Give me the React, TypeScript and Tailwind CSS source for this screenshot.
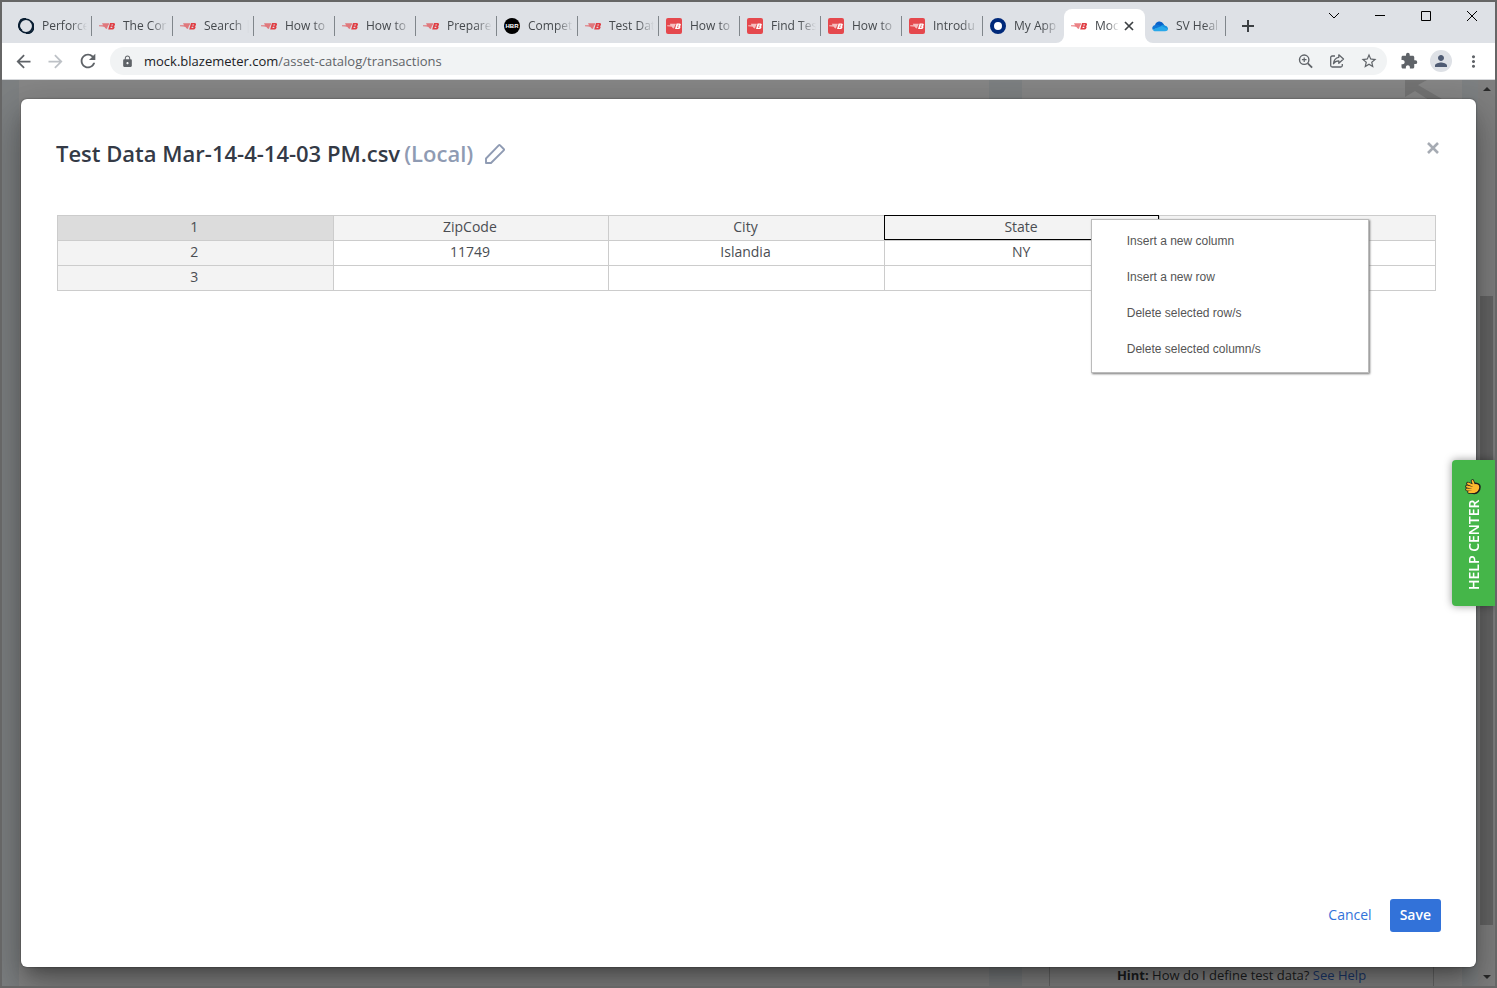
import React, { useState } from 'react';
import {
  MdArrowBack,
  MdArrowForward,
  MdExtension,
  MdLock,
  MdMoreVert,
  MdPerson,
  MdRefresh,
  MdStarBorder,
} from 'react-icons/md';

type Favicon = 'perforce' | 'blaze' | 'blazeBox' | 'hbr' | 'ring' | 'cloud';

interface Tab {
  icon: Favicon;
  title: string;
  active?: boolean;
}

const tabs: Tab[] = [
  { icon: 'perforce', title: 'Perforce' },
  { icon: 'blaze', title: 'The Cor' },
  { icon: 'blaze', title: 'Search |' },
  { icon: 'blaze', title: 'How to' },
  { icon: 'blaze', title: 'How to' },
  { icon: 'blaze', title: 'Prepare' },
  { icon: 'hbr', title: 'Compet' },
  { icon: 'blaze', title: 'Test Dat' },
  { icon: 'blazeBox', title: 'How to' },
  { icon: 'blazeBox', title: 'Find Tes' },
  { icon: 'blazeBox', title: 'How to' },
  { icon: 'blazeBox', title: 'Introdu' },
  { icon: 'ring', title: 'My App' },
  { icon: 'blaze', title: 'Moc', active: true },
  { icon: 'cloud', title: 'SV Heal' },
];

const rows = [
  ['1', 'ZipCode', 'City', 'State', ''],
  ['2', '11749', 'Islandia', 'NY', ''],
  ['3', '', '', '', ''],
];

const menuItems = [
  'Insert a new column',
  'Insert a new row',
  'Delete selected row/s',
  'Delete selected column/s',
];

const BlazeMark = ({ boxed }: { boxed?: boolean }) => (
  <svg viewBox="0 0 16 16" className="size-4 shrink-0">
    {boxed && <rect width="16" height="16" rx="2" fill="#e5484d" />}
    <g fill={boxed ? '#fff' : '#e03f45'} transform={boxed ? 'translate(1.2 1.2) scale(.85)' : undefined}>
      <path d="M3 5.300h7.200L9.700 7H9.400l-.4 1.500H8.600L8 11 6.300 10.300 5.500 9 3.500 8.600 0 8.200V7.200h4z" opacity=".65" />
      <path
        fillRule="evenodd"
        d="M11 5h3.300c1.500 0 2 .9 1.700 1.900-.2.600-.6 1-1.200 1.200.7.200.9.800.7 1.600-.4 1.300-1.300 1.900-2.800 1.900H9.200zm1.500 1.400-.3 1h1.200c.8 0 1-1 .2-1zm-.7 2.300-.4 1.300h1.300c.9 0 1.100-1.300.3-1.300z"
      />
    </g>
  </svg>
);

const TabIcon = ({ icon }: { icon: Favicon }) => {
  if (icon === 'blaze') return <BlazeMark />;
  if (icon === 'blazeBox') return <BlazeMark boxed />;
  if (icon === 'hbr') {
    return (
      <span className="flex size-4 shrink-0 items-center justify-center rounded-full bg-black font-['Liberation_Sans'] text-[6px] font-bold text-white">
        HBR
      </span>
    );
  }
  if (icon === 'ring') {
    return (
      <svg viewBox="0 0 16 16" className="size-4 shrink-0">
        <circle cx="8" cy="8" r="6" fill="#fff" stroke="#00297a" strokeWidth="4" />
      </svg>
    );
  }
  if (icon === 'cloud') {
    return (
      <svg viewBox="0 0 16 16" className="size-4 shrink-0">
        <path d="M3 7.2A4.6 4.6 0 0 1 11.6 6L13 9 4 12z" fill="#0a62c9" />
        <path d="M3.3 7a3.1 3.1 0 0 0-2.5 4.8L10 8.2 6 6.7A4 4 0 0 0 3.3 7z" fill="#1177d6" />
        <path d="M11 6.4a3.6 3.6 0 0 1 2 1.4c1.700.2 3 1.300 3 3.200l-3 .5-4.500-3.500z" fill="#1490df" />
        <path d="M.7 11.500C1.200 12.800 2.300 13.300 3.500 13.300h9.500c1.800 0 2.800-1 3-2.300L9.700 8.100z" fill="#28a8ea" />
      </svg>
    );
  }
  return (
    <svg viewBox="0 0 16 16" className="size-4 shrink-0" fill="none" stroke="#0b1f33">
      <circle cx="8" cy="8" r="6.700" strokeWidth="1.500" />
      <path d="M8 .8a6.500 6.500 0 0 0-4 12M8 15.200a6.500 6.500 0 0 0 4.500-12" strokeWidth="1.800" />
      <path d="M2.500 1.500 4 3M12 13l1.500 1.500" strokeWidth="1" />
    </svg>
  );
};

const BrowserTab = ({ icon, title, active, last }: Tab & { last?: boolean }) => {
  if (active) {
    return (
      <div className="relative flex h-[34px] w-[81px] shrink-0 items-center rounded-t-lg bg-white pl-[7px]">
        <svg viewBox="0 0 8 8" className="absolute bottom-0 -left-2 size-2" fill="#fff">
          <path d="M8 0v8H0a8 8 0 0 0 8-8z" />
        </svg>
        <svg viewBox="0 0 8 8" className="absolute -right-2 bottom-0 size-2" fill="#fff">
          <path d="M0 0v8h8a8 8 0 0 1-8-8z" />
        </svg>
        <TabIcon icon={icon} />
        <span className="ml-2 w-6 whitespace-nowrap [mask-image:linear-gradient(to_right,#000_50%,transparent)]">
          {title}
        </span>
        <button aria-label="Close tab" className="ml-[5px] shrink-0">
          <svg viewBox="0 0 10 10" className="size-[10px]" stroke="#3c4043" strokeWidth="1.700">
            <path d="M1 1l8 8M9 1L1 9" />
          </svg>
        </button>
      </div>
    );
  }

  return (
    <div className="flex h-[34px] w-[81px] shrink-0 items-center">
      <div className={`flex h-5 w-full items-center border-r pl-[7px] ${last ? 'border-transparent' : 'border-[#80868b]'}`}>
        <TabIcon icon={icon} />
        <span className="ml-2 w-[47px] whitespace-nowrap [mask-image:linear-gradient(to_right,#000_60%,transparent_96%)]">
          {title}
        </span>
      </div>
    </div>
  );
};

const WindowControls = () => (
  <div className="flex h-[27px] shrink-0 text-black">
    <button aria-label="Search tabs" className="flex w-[46px] items-center justify-center">
      <svg viewBox="0 0 12 12" className="size-3" fill="none" stroke="currentColor">
        <path d="M1 3l5 5 5-5" />
      </svg>
    </button>
    <button aria-label="Minimize" className="flex w-[46px] items-center justify-center">
      <svg viewBox="0 0 10 10" className="size-[10px]" stroke="currentColor">
        <path d="M0 4.500h10" />
      </svg>
    </button>
    <button aria-label="Maximize" className="flex w-[46px] items-center justify-center">
      <svg viewBox="0 0 10 10" className="size-[10px]" fill="none" stroke="currentColor">
        <path d="M.5.5h9v9h-9z" />
      </svg>
    </button>
    <button aria-label="Close window" className="flex w-[46px] items-center justify-center">
      <svg viewBox="0 0 10 10" className="size-[10px]" stroke="currentColor">
        <path d="M0 0l10 10M10 0L0 10" />
      </svg>
    </button>
  </div>
);

const Toolbar = () => {
  const [url, setUrl] = useState('mock.blazemeter.com/asset-catalog/transactions');
  const [host, ...path] = url.split('/');

  return (
    <div className="flex h-[37px] shrink-0 items-center border-b border-[#d5d7da] bg-white pl-[11px] pr-3 text-[#5f6368]">
      <div className="flex gap-[11px]">
        <button aria-label="Back"><MdArrowBack size={21} /></button>
        <button aria-label="Forward" className="text-[#bdc1c6]"><MdArrowForward size={21} /></button>
        <button aria-label="Reload"><MdRefresh size={22} /></button>
      </div>
      <div className="ml-[11px] flex h-7 flex-1 items-center rounded-full bg-[#f1f3f4] pl-[11px] pr-[9px]">
        <MdLock size={13} className="shrink-0" />
        <div className="relative ml-[10px] flex-1 text-[13px] leading-5">
          <div aria-hidden="true">
            <span className="text-[#202124]">{host}</span>/{path.join('/')}
          </div>
          <input
            aria-label="Address"
            value={url}
            onChange={(e) => setUrl(e.target.value)}
            className="absolute inset-0 w-full bg-transparent text-transparent caret-black outline-none"
          />
        </div>
        <div className="flex items-center gap-[15px]">
          <button aria-label="Zoom">
            <svg viewBox="0 0 16 16" className="size-4" fill="none" stroke="currentColor">
              <circle cx="6.200" cy="6.700" r="4.700" strokeWidth="1.400" />
              <path d="M9.800 10.300l4.300 4.300" strokeWidth="1.800" />
              <path d="M6.200 4.400v4.600M3.900 6.700h4.600" strokeWidth="1.200" />
            </svg>
          </button>
          <button aria-label="Share">
            <svg viewBox="0 0 16 16" className="size-4" fill="none" stroke="currentColor" strokeWidth="1.300" strokeLinejoin="round">
              <path d="M6 3H3.200C2.300 3 1.700 3.600 1.700 4.500v8c0 .9.600 1.500 1.500 1.500h8.600c.9 0 1.500-.6 1.500-1.500V11" />
              <path d="M9.800 1.800l4.700 4.200-4.700 4.200V7.800C7.300 7.800 5.600 8.700 4.500 10.700 4.800 7.300 6.600 4.800 9.800 4.300z" />
            </svg>
          </button>
          <button aria-label="Bookmark"><MdStarBorder size={18} /></button>
        </div>
      </div>
      <button aria-label="Extensions" className="ml-[13px]"><MdExtension size={18} /></button>
      <button aria-label="Profile" className="ml-3 flex size-[22px] items-center justify-center rounded-full bg-[#dee1e6] text-[#4f5b73]">
        <MdPerson size={18} />
      </button>
      <button aria-label="Menu" className="ml-3"><MdMoreVert size={19} /></button>
    </div>
  );
};

// Dimmed catalog page that sits behind the dialog
const PageBehind = () => (
  <div className="absolute inset-0 flex bg-[#7d8082]">
    <div className="ml-[17px] flex-1 bg-[#868686]" />
    <div className="relative ml-[33px] flex w-[440px] flex-col justify-end bg-[#868686]">
      <svg viewBox="0 0 38 20" className="absolute top-0 right-[19px] h-5 w-[38px]" fill="#747474">
        <path d="M0 0h22l-9 5 24 14v1H24L10 11 0 17z" />
      </svg>
      <div className="mr-7 ml-[27px] flex h-[30px] items-center justify-center border-x border-[#6b6b6b] pt-[10px] text-[13px] text-[#1c1e22]">
        <p>
          <b className="font-bold">Hint:</b> How do I define test data?{' '}
          <a href="#help" className="text-[#1b3a70]">See Help</a>
        </p>
      </div>
    </div>
    <div className="ml-4 flex w-[17px] flex-col items-center justify-between bg-[#7f7f7f] py-[7px]">
      <svg viewBox="0 0 8 4" className="h-1 w-2" fill="#2a2a2a"><path d="M0 4l4-4 4 4z" /></svg>
      <div className="mt-[205px] mb-[50px] w-[13px] flex-1 bg-[#656565]" />
      <svg viewBox="0 0 8 4" className="h-1 w-2" fill="#2a2a2a"><path d="M0 0l4 4 4-4z" /></svg>
    </div>
  </div>
);

const ContextMenu = () => (
  <div
    role="menu"
    className="absolute top-[3px] left-[206px] z-10 flex w-[278px] flex-col border border-[#bbb] bg-white py-1 font-['Liberation_Sans',sans-serif] text-xs text-[#555] shadow-[1px_1px_2px_0_#777]"
  >
    {menuItems.map((item) => (
      <button key={item} role="menuitem" className="h-9 pb-[2px] pl-[35px] text-left">
        {item}
      </button>
    ))}
  </div>
);

const DataTable = () => (
  <table className="mr-[5px] ml-px w-[calc(100%-6px)] table-fixed border-collapse text-center text-sm leading-[22px] text-[#4a4d52]">
    <tbody>
      {rows.map((row, r) => (
        <tr key={row[0]} className="h-[25px]">
          {row.map((cell, c) => {
            const selected = r === 0 && c === 3;
            let bg = 'bg-white';
            if (r === 0 || c === 0) bg = 'bg-[#f3f3f3]';
            if (r === 0 && c === 0) bg = 'bg-[#dcdcdc]';
            return (
              <td key={c} className={`border border-[#ccc] p-0 pr-[2px] pb-[2px] ${bg} ${selected ? 'relative' : ''}`}>
                {cell}
                {selected && <span className="pointer-events-none absolute -top-px right-0 bottom-0 -left-px border border-black" />}
                {selected && <ContextMenu />}
              </td>
            );
          })}
        </tr>
      ))}
    </tbody>
  </table>
);

const Dialog = () => (
  <div
    role="dialog"
    aria-label="Test data"
    className="absolute inset-[19px] flex flex-col rounded-md bg-white px-[35px] pt-[35px] pb-[35px] shadow-[0_0_2px_rgba(0,0,0,0.5),0_11px_15px_-7px_rgba(0,0,0,0.3),0_24px_38px_3px_rgba(0,0,0,0.2),0_9px_40px_4px_rgba(0,0,0,0.14)]"
  >
    <div className="flex items-start justify-between">
      <h1 className="flex items-center text-[22px] leading-[38px] font-semibold text-[#343a46]">
        Test Data Mar-14-4-14-03 PM.csv
        <span className="ml-1 text-[#8f9bb3]">(Local)</span>
        <button aria-label="Rename" className="mt-[2px] ml-3">
          <svg viewBox="0 0 20 20" className="size-5" fill="none" stroke="#8f9bb3" strokeWidth="1.900" strokeLinejoin="round">
            <path d="M1 19v-4.500L13.700 1.400a1 1 0 0 1 1.400 0l3.600 3.600a1 1 0 0 1 0 1.400L6 19z" />
          </svg>
        </button>
      </h1>
      <button aria-label="Close" className="mt-2 mr-[2px]">
        <svg viewBox="0 0 12 12" className="size-3" stroke="#a6abb3" strokeWidth="2.600">
          <path d="M1 1l10 10M11 1L1 11" />
        </svg>
      </button>
    </div>
    <div className="mt-[43px] flex-1">
      <DataTable />
    </div>
    <div className="flex justify-end gap-2 text-sm">
      <button className="h-[33px] px-[10px] pb-[2px] text-[#3272d9]">Cancel</button>
      <button className="h-[33px] rounded-[3px] bg-[#3272d9] px-[10px] pb-[2px] font-semibold text-white">Save</button>
    </div>
  </div>
);

const HelpCenter = () => (
  <button className="absolute top-[380px] right-0 flex h-[146px] w-[43px] rotate-180 items-center justify-start gap-1 rounded-r bg-[#45b649] pt-4 text-sm font-semibold text-white shadow-[0_0_8px_rgba(0,0,0,0.4)] [writing-mode:vertical-rl]">
    <span>HELP CENTER</span>
    <svg viewBox="0 0 16 16" className="size-4 shrink-0 rotate-180" fill="none" strokeLinecap="round">
      <path d="M9 6L7.500 2M9 7L3 4.500M8 9L2 7.500M8 11L2 10.500M9 13l-5 0" stroke="#1d1d1b" strokeWidth="3.400" />
      <path d="M8 5c3-1.500 7-.5 7 3 0 3.500-2.500 6.500-5.500 6.500S6 13 6 10z" fill="#fdb92e" stroke="#1d1d1b" strokeWidth="1.500" />
      <path d="M9 6L7.500 2M9 7L3 4.500M8 9L2 7.500M8 11L2 10.500M9 13l-5 0" stroke="#fdb92e" strokeWidth="1.900" />
    </svg>
  </button>
);

export default function App() {
  return (
    <div className="flex min-h-screen flex-col border-2 border-[#666] bg-[#808080] font-['Open_Sans','Noto_Sans',sans-serif]">
      <div className="flex h-[41px] shrink-0 justify-between bg-[#dee1e6]">
        <div className="flex items-end pl-[9px] text-xs text-[#45494d]">
          {tabs.map((tab, i) => (
            <BrowserTab key={i} {...tab} last={tabs[i + 1]?.active} />
          ))}
          <button aria-label="New tab" className="flex h-[34px] w-11 items-center justify-center">
            <svg viewBox="0 0 12 12" className="size-3" stroke="#3c4043" strokeWidth="2">
              <path d="M6 0v12M0 6h12" />
            </svg>
          </button>
        </div>
        <WindowControls />
      </div>
      <Toolbar />
      <main className="relative flex-1 overflow-hidden">
        <PageBehind />
        <Dialog />
        <HelpCenter />
      </main>
    </div>
  );
}
